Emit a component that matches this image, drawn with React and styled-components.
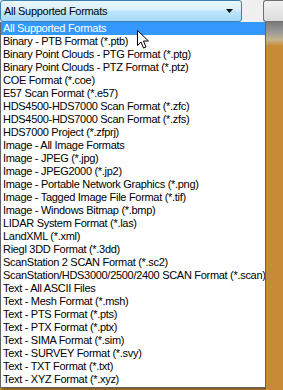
import styled, { createGlobalStyle } from 'styled-components';

const formats = [
  "All Supported Formats",
  "Binary - PTB Format (*.ptb)",
  "Binary Point Clouds - PTG Format (*.ptg)",
  "Binary Point Clouds - PTZ Format (*.ptz)",
  "COE Format (*.coe)",
  "E57 Scan Format (*.e57)",
  "HDS4500-HDS7000 Scan Format (*.zfc)",
  "HDS4500-HDS7000 Scan Format (*.zfs)",
  "HDS7000 Project (*.zfprj)",
  "Image - All Image Formats",
  "Image - JPEG (*.jpg)",
  "Image - JPEG2000 (*.jp2)",
  "Image - Portable Network Graphics (*.png)",
  "Image - Tagged Image File Format (*.tif)",
  "Image - Windows Bitmap (*.bmp)",
  "LIDAR System Format (*.las)",
  "LandXML (*.xml)",
  "Riegl 3DD Format (*.3dd)",
  "ScanStation 2 SCAN Format (*.sc2)",
  "ScanStation/HDS3000/2500/2400 SCAN Format (*.scan)",
  "Text - All ASCII Files",
  "Text - Mesh Format (*.msh)",
  "Text - PTS Format (*.pts)",
  "Text - PTX Format (*.ptx)",
  "Text - SIMA Format (*.sim)",
  "Text - SURVEY Format (*.svy)",
  "Text - TXT Format (*.txt)",
  "Text - XYZ Format (*.xyz)",
];

const GlobalStyle = createGlobalStyle`
  html, body {
    margin: 0;
    padding: 0;
  }
  body {
    width: 283px;
    height: 390px;
    overflow: hidden;
    background: #c88a34;
    font-family: "Liberation Sans", Arial, sans-serif;
  }
`;

const Window = () => {
  return (
    <Page>
      <GlobalStyle />
      <TopBar>
        <Combo>
          <ComboText>All Supported Formats</ComboText>
          <Arrow viewBox="0 0 7 4">
            <path d="M0 0h7L3.5 4z" fill="#000" />
          </Arrow>
        </Combo>
        <SideButton />
      </TopBar>
      <Body>
        <List>
          {formats.map((f, i) => (
            <Item key={f} selected={i === 0}>{f}</Item>
          ))}
        </List>
        <Wood />
      </Body>
      <Cursor viewBox="0 0 12 19">
        <path d="M0.5 0.5V15.5L4 12L6.5 18L9 17L6.5 11H11.5Z" fill="#fff" stroke="#000" strokeWidth="1" strokeLinejoin="round" />
      </Cursor>
    </Page>
  );
}

// Whole screenshot area
const Page = styled.div `
  position: relative;
  width: 283px;
  height: 390px;
`;

// Gray strip holding the combo box
const TopBar = styled.div `
  display: flex;
  height: 22px;
  background: #f0f0f0;
`;

// Hovered combo box
const Combo = styled.div `
  box-sizing: border-box;
  width: 247px;
  height: 22px;
  display: flex;
  align-items: center;
  justify-content: space-between;
  padding: 0 8px 0 3px;
  border: 1px solid #3c7fb1;
  border-radius: 3px;
  background: linear-gradient(#eaf6fd 0%, #d9f0fc 45%, #bee6fd 50%, #a7d9f5 100%);
`;

const ComboText = styled.span `
  font-size: 11px;
  letter-spacing: -0.3px;
  color: #000;
`;

const Arrow = styled.svg `
  width: 7px;
  height: 4px;
`;

// Edge of the neighbouring button
const SideButton = styled.div `
  box-sizing: border-box;
  margin-left: 21px;
  width: 20px;
  height: 22px;
  border: 1px solid #707070;
  border-right: none;
  border-radius: 3px 0 0 3px;
  background: linear-gradient(#f2f2f2, #dcdcdc);
`;

const Body = styled.div `
  display: flex;
  height: 368px;
`;

// Drop down list
const List = styled.div `
  box-sizing: border-box;
  width: 266px;
  height: 366px;
  background: #fff;
  border: 1px solid #646464;
  border-top: none;
  box-shadow: 2px 2px 2px rgba(0, 0, 0, 0.35);
`;

const Item = styled.div `
  height: 13px;
  line-height: 13px;
  padding-left: 2px;
  font-size: 11px;
  letter-spacing: -0.3px;
  white-space: nowrap;
  overflow: hidden;
  color: ${p => p.selected ? '#fff' : '#000'};
  background: ${p => p.selected ? '#3399ff' : 'transparent'};
`;

// Wooden background right of the list
const Wood = styled.div `
  flex: 1;
  background: linear-gradient(#7a7a7a 0px, #9a9a9a 10px, #c6b38a 18px, #c88a34 24px, #c88a34 100%);
`;

// Mouse pointer over the list
const Cursor = styled.svg `
  position: absolute;
  left: 137px;
  top: 30px;
  width: 12px;
  height: 19px;
`;

export default Window;
